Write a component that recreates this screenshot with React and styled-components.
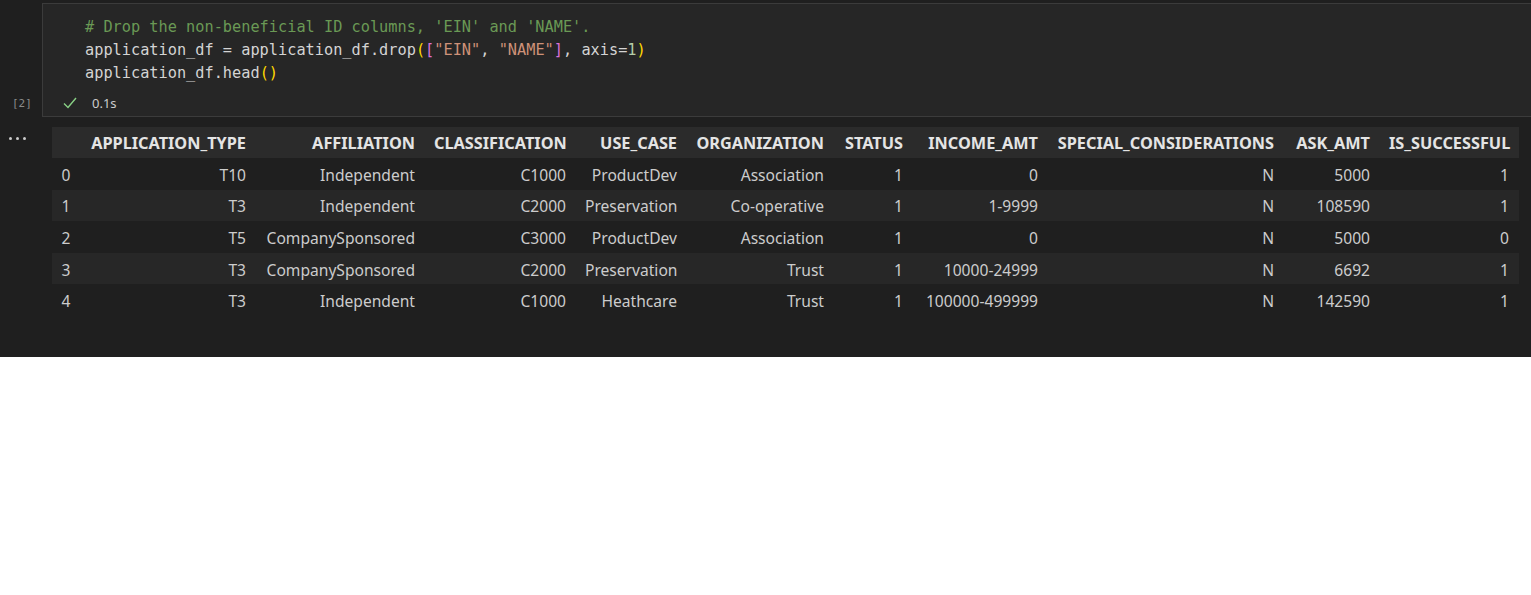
import React from "react";
import styled, { createGlobalStyle } from "styled-components";

const Global = createGlobalStyle`
  html, body { margin: 0; padding: 0; background: #ffffff; }
  #root { width: 1531px; }
`;

const Page = styled.div`
  background: #1f1f1f;
  height: 357px;
  padding-top: 3px;
  box-sizing: border-box;
  overflow: hidden;
`;

const CellRow = styled.div`
  display: grid;
  grid-template-columns: 42px 1fr;
`;

const Gutter = styled.div`
  display: flex;
  align-items: flex-end;
  justify-content: flex-start;
  padding: 0 0 7px 12px;
  font-family: "DejaVu Sans Mono", monospace;
  font-size: 11px;
  color: #8a8a8a;
`;

const CellBox = styled.div`
  background: #262626;
  border: 1px solid #3b3b3b;
  border-right: none;
  height: 114px;
  box-sizing: border-box;
  padding: 12px 0 0 42px;
`;

const Code = styled.pre`
  margin: 0;
  font-family: "DejaVu Sans Mono", monospace;
  font-size: 15.28px;
  line-height: 23px;
  color: #d4d4d4;
  white-space: pre;
`;

const Tok = styled.span`
  color: ${(p) => p.$c};
`;

const Status = styled.div`
  display: flex;
  align-items: center;
  height: 24px;
  margin: 6px 0 0 -22px;
  gap: 15px;
  font-family: "Noto Sans", sans-serif;
  font-size: 13px;
  color: #cccccc;
`;

const OutputRow = styled.div`
  display: grid;
  grid-template-columns: 52px 1fr;
  margin-top: 10px;
`;

const Dots = styled.div`
  display: flex;
  gap: 4px;
  padding: 10px 0 0 9px;
  align-self: start;
`;

const Dot = styled.span`
  width: 3px;
  height: 3px;
  border-radius: 50%;
  background: #cccccc;
`;

const Table = styled.table`
  border-collapse: collapse;
  table-layout: fixed;
  width: 1466.5px;
  font-family: "Noto Sans", sans-serif;
  font-size: 15.6px;
  color: #cccccc;
`;

const HeadRow = styled.tr`
  background: #2b2b2b;
  height: 31px;
`;

const Row = styled.tr`
  background: ${(p) => (p.$alt ? "#272727" : "transparent")};
  height: 31.6px;
`;

const Th = styled.th`
  font-weight: 700;
  font-size: 16.3px;
  color: #e4e4e4;
  text-align: right;
  padding: 0 9.5px;
  white-space: nowrap;
  overflow: visible;
`;

const Td = styled.td`
  text-align: ${(p) => (p.$left ? "left" : "right")};
  padding: 2px 9.5px 0;
  white-space: nowrap;
`;

const widths = [28.5, 175, 169, 151, 111, 147, 79, 135, 236, 96, 139];
const cols = [
  "APPLICATION_TYPE",
  "AFFILIATION",
  "CLASSIFICATION",
  "USE_CASE",
  "ORGANIZATION",
  "STATUS",
  "INCOME_AMT",
  "SPECIAL_CONSIDERATIONS",
  "ASK_AMT",
  "IS_SUCCESSFUL",
];
const rows = [
  ["T10", "Independent", "C1000", "ProductDev", "Association", "1", "0", "N", "5000", "1"],
  ["T3", "Independent", "C2000", "Preservation", "Co-operative", "1", "1-9999", "N", "108590", "1"],
  ["T5", "CompanySponsored", "C3000", "ProductDev", "Association", "1", "0", "N", "5000", "0"],
  ["T3", "CompanySponsored", "C2000", "Preservation", "Trust", "1", "10000-24999", "N", "6692", "1"],
  ["T3", "Independent", "C1000", "Heathcare", "Trust", "1", "100000-499999", "N", "142590", "1"],
];

const Check = () => (
  <svg width="14" height="12" viewBox="0 0 14 12" fill="none">
    <path d="M1 6.5 L5 10.5 L13 1" stroke="#89d185" strokeWidth="1.4" />
  </svg>
);

export default function App() {
  return (
    <>
      <Global />
      <Page>
        <CellRow>
          <Gutter>[2]</Gutter>
          <CellBox>
            <Code>
              <Tok $c="#6a9955"># Drop the non-beneficial ID columns, 'EIN' and 'NAME'.</Tok>
              {"\n"}
              application_df = application_df.drop<Tok $c="#ffd700">(</Tok>
              <Tok $c="#da70d6">[</Tok>
              <Tok $c="#ce9178">"EIN"</Tok>, <Tok $c="#ce9178">"NAME"</Tok>
              <Tok $c="#da70d6">]</Tok>, axis=<Tok $c="#b5cea8">1</Tok>
              <Tok $c="#ffd700">)</Tok>
              {"\n"}
              application_df.head<Tok $c="#ffd700">()</Tok>
            </Code>
            <Status>
              <Check />
              <span>0.1s</span>
            </Status>
          </CellBox>
        </CellRow>
        <OutputRow>
          <Dots>
            <Dot />
            <Dot />
            <Dot />
          </Dots>
          <Table>
            <colgroup>
              {widths.map((w, i) => (
                <col key={i} style={{ width: w }} />
              ))}
            </colgroup>
            <thead>
              <HeadRow>
                <Th />
                {cols.map((c) => (
                  <Th key={c}>{c}</Th>
                ))}
              </HeadRow>
            </thead>
            <tbody>
              {rows.map((r, i) => (
                <Row key={i} $alt={i % 2 === 1}>
                  <Td $left>{i}</Td>
                  {r.map((v, j) => (
                    <Td key={j}>{v}</Td>
                  ))}
                </Row>
              ))}
            </tbody>
          </Table>
        </OutputRow>
      </Page>
    </>
  );
}
